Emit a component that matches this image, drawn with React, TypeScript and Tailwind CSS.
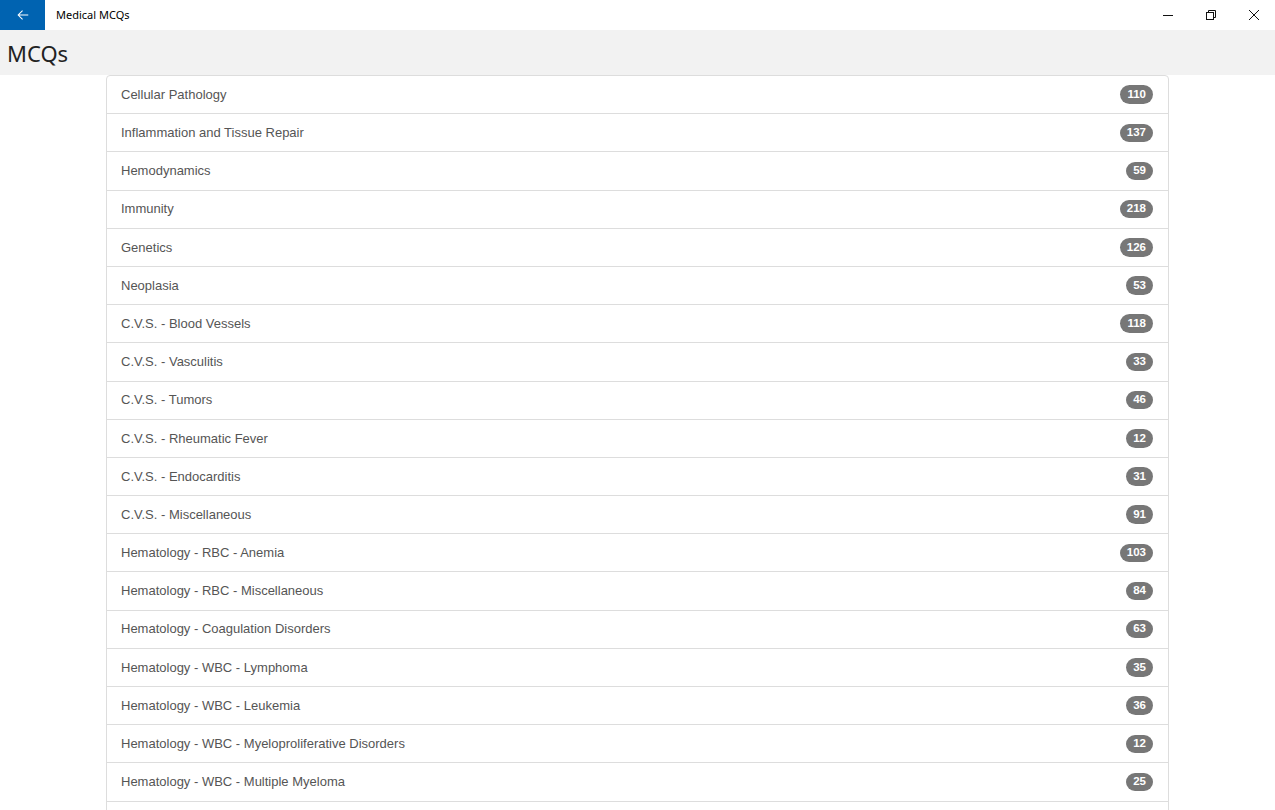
import React from "react";

const items: [string, number][] = [
  ["Cellular Pathology", 110],
  ["Inflammation and Tissue Repair", 137],
  ["Hemodynamics", 59],
  ["Immunity", 218],
  ["Genetics", 126],
  ["Neoplasia", 53],
  ["C.V.S. - Blood Vessels", 118],
  ["C.V.S. - Vasculitis", 33],
  ["C.V.S. - Tumors", 46],
  ["C.V.S. - Rheumatic Fever", 12],
  ["C.V.S. - Endocarditis", 31],
  ["C.V.S. - Miscellaneous", 91],
  ["Hematology - RBC - Anemia", 103],
  ["Hematology - RBC - Miscellaneous", 84],
  ["Hematology - Coagulation Disorders", 63],
  ["Hematology - WBC - Lymphoma", 35],
  ["Hematology - WBC - Leukemia", 36],
  ["Hematology - WBC - Myeloproliferative Disorders", 12],
  ["Hematology - WBC - Multiple Myeloma", 25],
  ["Hematology - Miscellaneous", 40],
];

export default function App() {
  return (
    <div className="w-[1275px] h-[810px] overflow-hidden bg-white flex flex-col">
      <div className="h-[30px] flex items-center bg-white shrink-0">
        <div className="w-[45px] h-[30px] bg-[#0063b1] flex items-center justify-center">
          <svg width="14" height="14" viewBox="0 0 16 16" fill="none" stroke="white" strokeWidth="1.2">
            <path d="M14 8H2.5M7.5 3L2.5 8l5 5" />
          </svg>
        </div>
        <div className="ml-[11px] text-[11px] text-black" style={{ fontFamily: '"Noto Sans", "Open Sans", sans-serif' }}>
          Medical MCQs
        </div>
        <div className="ml-auto flex h-[30px]">
          <div className="w-[43px] h-[30px] flex items-center justify-center">
            <svg width="10" height="10" viewBox="0 0 10 10"><path d="M0 5.5h10" stroke="#111" strokeWidth="1" /></svg>
          </div>
          <div className="w-[43px] h-[30px] flex items-center justify-center">
            <svg width="10" height="10" viewBox="0 0 10 10" fill="none" stroke="#111" strokeWidth="1">
              <rect x="0.5" y="2.5" width="7" height="7" />
              <path d="M2.5 2.5V0.5h7v7h-2" />
            </svg>
          </div>
          <div className="w-[43px] h-[30px] flex items-center justify-center">
            <svg width="10" height="10" viewBox="0 0 10 10"><path d="M0 0L10 10M10 0L0 10" stroke="#111" strokeWidth="1" /></svg>
          </div>
        </div>
      </div>
      <div className="h-[45px] bg-[#f2f2f2] flex items-center pl-[7px] shrink-0">
        <span className="text-[22px] text-[#222] leading-none" style={{ fontFamily: '"Noto Sans", "Open Sans", sans-serif' }}>
          MCQs
        </span>
      </div>
      <div className="px-[106px]">
        <div className="flex flex-col" style={{ fontFamily: '"Liberation Sans", Arial, sans-serif' }}>
          {items.map(([name, n], i) => (
            <div
              key={i}
              className={`h-[39.2px] -mb-px border border-[#dddddd] flex items-center justify-between pl-[14px] pr-[15px] text-[13px] text-[#555555] bg-white ${i === 0 ? "rounded-t-[4px]" : ""}`}
            >
              <span>{name}</span>
              <span className="bg-[#777777] text-white text-[11.5px] font-bold leading-none rounded-[10px] px-[7px] py-[3.5px]">
                {n}
              </span>
            </div>
          ))}
        </div>
      </div>
    </div>
  );
}
